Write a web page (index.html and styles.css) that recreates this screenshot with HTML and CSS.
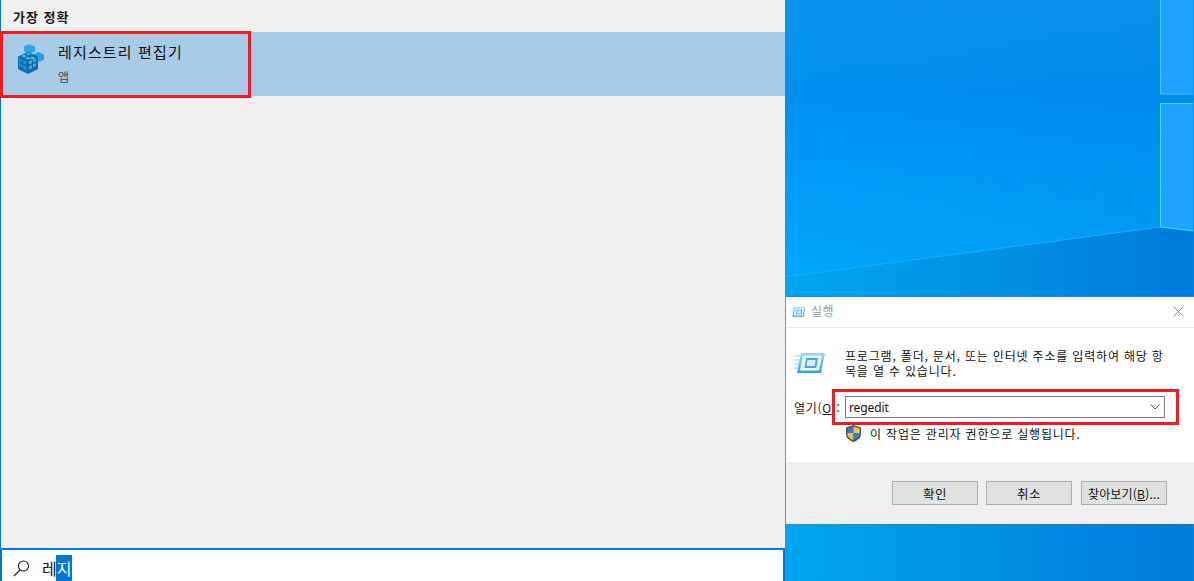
FILE: index.html
```html
<!DOCTYPE html>
<html lang="ko">
<head>
  <meta charset="UTF-8">
  <title>실행 - 레지스트리 편집기</title>
  <link rel="stylesheet" href="styles.css">
</head>
<body>
  <svg class="defs" width="0" height="0">
    <defs>
      <linearGradient id="runBlue" x1="0" y1="0" x2="0" y2="1">
        <stop offset="0" stop-color="#9ad6f7"/>
        <stop offset="1" stop-color="#3b9be0"/>
      </linearGradient>
      <symbol id="runIcon" viewBox="0 0 32 32">
        <path d="M1 10h7M0 14h6M0 18h5M0 22h4" stroke="#b5def6" stroke-width="1.400"/>
        <path d="M7 7h24l-4 20H3z" fill="url(#runBlue)"/>
        <path d="M9 9.500h19l-3 15H6z" fill="#eef8fe"/>
        <path d="M12 12h12l-1.600 10H10.400z" fill="#4aa6e4"/>
        <path d="M13.500 14h8l-.8 6h-8z" fill="#dcf0fc"/>
      </symbol>
    </defs>
  </svg>

  <main class="search-panel">
    <h2 class="section-title">가장 정확</h2>
    <div class="best-match">
      <svg class="regedit-icon" width="28" height="30" viewBox="0 0 28 30">
        <path d="M11 0l6 2.500v5L12 10 6 7.500v-5z" fill="#30a8e6"/>
        <path d="M20 8l6 2.500v5L21 18l-5-2.500v-5z" fill="#2a9fe0"/>
        <path d="M0 12.500L10 8l10 4.500V25l-10 5-10-5z" fill="#0b6fae"/>
        <path d="M3 12l3-1.300 3 1.300-3 1.300zM8 9.800l2-.9 3 1.300-2 1zM11.500 14l3-1.300 3 1.300-3 1.300zM7 14.200l3-1.300 3 1.300-3 1.300z" fill="#4cc3f2"/>
        <path d="M1 14l3 1.400v3L1 17zM5 16l3 1.400v3L5 19zM1 19l3 1.400v3L1 22zM5 21.200l3 1.400v3l-3-1.400z" fill="#1f96d8"/>
        <path d="M11 17.500l3-1.400v3L11 20.500zM15 15.500l3-1.400v3L15 18.500zM11 22.500l3-1.400v3L11 25.500zM15 20.500l3-1.400v3L15 23.500z" fill="#38b0ea"/>
      </svg>
      <div class="match-text">
        <span class="match-name">레지스트리 편집기</span>
        <span class="match-kind">앱</span>
      </div>
    </div>
    <div class="spacer"></div>
    <div class="search-box">
      <svg class="search-icon" width="18" height="18" viewBox="0 0 18 18">
        <circle cx="10.500" cy="7" r="5" fill="none" stroke="#222" stroke-width="1.100"/>
        <path d="M7 11l-6 6" stroke="#222" stroke-width="1.300"/>
      </svg>
      <span class="search-text">레<span class="selected">지</span></span>
    </div>
    <div class="red-box match-mark"></div>
  </main>

  <section class="desktop">
    <svg class="wallpaper" width="408" height="581" viewBox="0 0 408 581">
      <defs>
        <linearGradient id="sky" x1="0" y1="0" x2="0" y2="1">
          <stop offset="0" stop-color="#0a96ee"/>
          <stop offset=".33" stop-color="#0090f0"/>
          <stop offset=".7" stop-color="#009ef8"/>
          <stop offset="1" stop-color="#00a5fc"/>
        </linearGradient>
        <linearGradient id="shade" x1="0" y1="0" x2="1" y2="0">
          <stop offset="0" stop-color="#0070d8" stop-opacity="0"/>
          <stop offset="1" stop-color="#0070d8" stop-opacity=".18"/>
        </linearGradient>
        <linearGradient id="floor" x1="0" y1="0" x2="1" y2="0">
          <stop offset="0" stop-color="#00a6f0"/>
          <stop offset="1" stop-color="#007ad8"/>
        </linearGradient>
      </defs>
      <rect y="227" width="408" height="354" fill="url(#floor)"/>
      <path d="M0 277L375 227H408V0H0z" fill="url(#sky)"/>
      <path d="M0 277L375 227H408V0H0z" fill="url(#shade)"/>
      <path d="M0 277L375 227" stroke="#12b0ff" stroke-width="1" fill="none"/>
      <path d="M375.500 -1V94H409V-1z" fill="#1fa3ff" stroke="#3fd0f5"/>
      <path d="M375.500 103.500V227L409 231V103.500z" fill="#1fa3ff" stroke="#3fe0fa"/>
    </svg>

    <div class="run-dialog">
      <header class="dialog-title">
        <svg width="15" height="15"><use href="#runIcon"/></svg>
        <span class="title-text">실행</span>
        <svg class="close-icon" width="11" height="11" viewBox="0 0 11 11">
          <path d="M.5.5l10 10M10.500.5l-10 10" stroke="#8a8a8a" stroke-width="1"/>
        </svg>
      </header>
      <div class="dialog-body">
        <div class="intro">
          <svg width="32" height="32"><use href="#runIcon"/></svg>
          <p>프로그램, 폴더, 문서, 또는 인터넷 주소를 입력하여 해당 항<br>목을 열 수 있습니다.</p>
        </div>
        <div class="open-row">
          <label class="open-label">열기(<u>O</u>):</label>
          <div class="combo">
            <span>regedit</span>
            <svg width="10" height="6" viewBox="0 0 10 6">
              <path d="M.5.5L5 5 9.500.5" fill="none" stroke="#555" stroke-width="1"/>
            </svg>
          </div>
        </div>
        <div class="admin-note">
          <svg width="15" height="17" viewBox="0 0 15 17">
            <path d="M7.500 0L15 2.500V9c0 4-3.500 6.500-7.500 8C3.500 15.500 0 13 0 9V2.500z" fill="#4b4f57"/>
            <path d="M7.500 1.500V8H1.300V3.500z" fill="#2f7fd8"/>
            <path d="M7.500 1.500L13.700 3.500V8H7.500z" fill="#f4c33d"/>
            <path d="M1.300 8H7.500v7.300C4 14 1.300 12 1.300 9z" fill="#f4c33d"/>
            <path d="M7.500 8h6.200v1c0 3-2.700 5-6.200 6.300z" fill="#2f7fd8"/>
          </svg>
          <span>이 작업은 관리자 권한으로 실행됩니다.</span>
        </div>
      </div>
      <footer class="dialog-buttons">
        <button class="btn">확인</button>
        <button class="btn">취소</button>
        <button class="btn btn-browse">찾아보기(<u>B</u>)...</button>
      </footer>
      <div class="red-box combo-mark"></div>
    </div>
  </section>
</body>
</html>
```

FILE: styles.css
```css
* { box-sizing: border-box; }
html, body { height: 100%; }
body { margin: 0; display: flex; height: 581px; overflow: hidden; font-family: "Noto Sans CJK KR", "Noto Sans", sans-serif; color: #111; background: #0090f0; }
.defs { position: absolute; }

.search-panel { position: relative; width: 785px; height: 581px; flex: none; display: flex; flex-direction: column; background: #f0f0f0; border-left: 1px solid #0078c8; }
.section-title { margin: 0; height: 32px; padding-left: 12px; font-size: 13px; line-height: 34px; font-weight: 700; letter-spacing: 1px; color: #1a1a1a; }
.best-match { height: 64px; display: flex; align-items: flex-start; background: #a8cbe8; padding: 11px 0 0 17px; }
.regedit-icon { flex: none; margin: 1px 12px 0 0; }
.match-text { display: flex; flex-direction: column; }
.match-name { font-size: 15px; line-height: 18px; letter-spacing: 1.150px; color: #111; }
.match-kind { font-size: 12px; line-height: 16px; margin-top: 8px; color: #444; }
.spacer { flex: 1; }
.search-box { height: 33px; display: flex; align-items: flex-end; margin-left: -1px; background: #fff; border: 2px solid #0078d7; border-bottom: 0; padding: 0 0 0 11px; }
.search-icon { flex: none; margin: 0 11px 4px 0; }
.search-text { font-size: 16px; line-height: 26px; height: 26px; color: #111; }
.selected { display: inline-block; height: 26px; margin-left: -1px; padding: 0 1px; background: #0078d7; color: #fff; }

.red-box { position: absolute; border: 3px solid #ee1c25; pointer-events: none; }
.match-mark { left: -1px; top: 31px; width: 251px; height: 67px; }

.desktop { position: relative; flex: 1; padding-top: 296px; }
.wallpaper { position: absolute; left: 0; top: 0; }
.run-dialog { position: relative; width: 409px; margin-right: -1px; height: 228px; display: flex; flex-direction: column; background: #fff; border-left: 1px solid #8c8c8c; border-top: 1px solid #2a86c4; }
.dialog-title { height: 31px; flex: none; display: flex; align-items: center; padding: 0 10px 2px 5px; border-bottom: 1px solid #ececec; }
.title-text { margin: -2px 0 0 5px; font-size: 12px; letter-spacing: .4px; color: #9a9a9a; }
.close-icon { margin-left: auto; }
.dialog-body { flex: 1; padding: 18px 0 0 8px; }
.intro { display: flex; align-items: flex-start; height: 42px; }
.intro svg { flex: none; margin: 0 19px 0 0; }
.intro p { margin: 2px 0 0; font-size: 12px; line-height: 15px; white-space: nowrap; letter-spacing: .82px; color: #111; }
.open-row { display: flex; align-items: center; margin-top: 8px; height: 22px; }
.open-label { width: 51px; flex: none; font-size: 12px; letter-spacing: .7px; color: #222; }
.combo { width: 320px; height: 22px; display: flex; align-items: center; justify-content: space-between; padding: 0 4px 0 3px; border: 1px solid #7a7a7a; font-family: "Noto Sans", sans-serif; font-size: 12px; letter-spacing: -.1px; }
.admin-note { display: flex; align-items: center; gap: 9px; margin: 7px 0 0 52px; height: 16px; font-size: 12px; letter-spacing: .82px; color: #111; }
.dialog-buttons { height: 62px; flex: none; display: flex; gap: 8px; padding: 19px 0 0 106px; background: #f0f0f0; }
.btn { width: 86px; height: 24px; flex: none; margin: 0; padding: 0; background: #e1e1e1; border: 1px solid #adadad; font: inherit; font-size: 12.500px; letter-spacing: .4px; color: #111; }
.btn-browse { margin-left: 1px; font-size: 12px; letter-spacing: .2px; }
.combo-mark { left: 46px; top: 92px; width: 347px; height: 36px; }
```
